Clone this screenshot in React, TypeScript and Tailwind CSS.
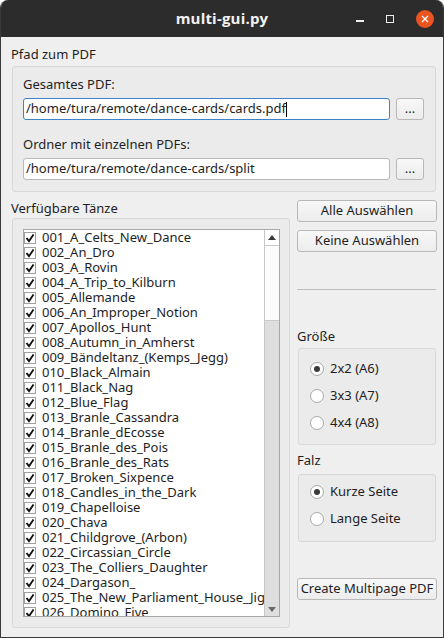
import React from 'react';

const dances = [
  '001_A_Celts_New_Dance',
  '002_An_Dro',
  '003_A_Rovin',
  '004_A_Trip_to_Kilburn',
  '005_Allemande',
  '006_An_Improper_Notion',
  '007_Apollos_Hunt',
  '008_Autumn_in_Amherst',
  '009_Bändeltanz_(Kemps_Jegg)',
  '010_Black_Almain',
  '011_Black_Nag',
  '012_Blue_Flag',
  '013_Branle_Cassandra',
  '014_Branle_dEcosse',
  '015_Branle_des_Pois',
  '016_Branle_des_Rats',
  '017_Broken_Sixpence',
  '018_Candles_in_the_Dark',
  '019_Chapelloise',
  '020_Chava',
  '021_Childgrove_(Arbon)',
  '022_Circassian_Circle',
  '023_The_Colliers_Daughter',
  '024_Dargason_',
  '025_The_New_Parliament_House_Jig',
  '026_Domino_Five',
];

function Button({ label, className = '' }: { label: string; className?: string }) {
  return (
    <button
      className={
        'flex items-center justify-center h-[22px] rounded-[3px] border border-[#b8b8b8] bg-gradient-to-b from-[#f8f8f8] to-[#ececec] text-[13px] text-[#1e1e1e] ' +
        className
      }
    >
      {label}
    </button>
  );
}

function Radio({ label, checked }: { label: string; checked?: boolean }) {
  return (
    <div className="flex items-center h-[27px]">
      <span className="flex items-center justify-center w-[14px] h-[14px] rounded-full border border-[#a8a8a8] bg-white">
        {checked && <span className="w-[6px] h-[6px] rounded-full bg-[#3a3a3a]" />}
      </span>
      <span className="ml-[6px] text-[13px] text-[#1e1e1e]">{label}</span>
    </div>
  );
}

function Check() {
  return (
    <span className="flex items-center justify-center w-[12px] h-[12px] border border-[#a0a0a0] bg-white">
      <svg width="10" height="10" viewBox="0 0 10 10">
        <path d="M1.5 5 L4 8.2 L8.5 1.5" fill="none" stroke="#111" strokeWidth="1.9" />
      </svg>
    </span>
  );
}

export default function App() {
  return (
    <div className="w-[444px] h-[638px] bg-white" style={{ fontFamily: '"Noto Sans", sans-serif' }}>
      <div className="w-full h-full flex flex-col bg-[#efefef] border-x border-b border-[#3a3a3a] rounded-t-[8px] overflow-hidden">
        {/* title bar */}
        <div className="relative h-[37px] shrink-0 bg-[#2c2c2c] flex items-center justify-center">
          <span className="text-[15px] font-bold text-[#f2f2f2] tracking-[0.2px]" style={{ fontFamily: '"Open Sans", sans-serif' }}>
            multi-gui.py
          </span>
          <div className="absolute right-[9px] top-0 h-full flex items-center gap-[22px]">
            <span className="w-[8px] h-[1.5px] bg-[#eee] mt-[5px]" />
            <span className="w-[8px] h-[8px] border border-[#eee]" />
            <span className="w-[18px] h-[18px] rounded-full bg-[#e95420] flex items-center justify-center">
              <svg width="8" height="8" viewBox="0 0 8 8">
                <path d="M1 1 L7 7 M7 1 L1 7" stroke="#fff" strokeWidth="1.4" />
              </svg>
            </span>
          </div>
        </div>

        <div className="flex-1 flex flex-col px-[10px] text-[13px] text-[#1e1e1e]">
          {/* path section */}
          <div className="h-[29px] flex items-center pt-[7px]">Pfad zum PDF</div>
          <div className="ml-[1px] w-[424px] h-[126px] rounded-[3px] border border-[#d8d8d8] bg-[#ebebeb] px-[10px] pt-[7px]">
            <div className="h-[22px] flex items-center">Gesamtes PDF:</div>
            <div className="flex gap-[6px] mt-[2px]">
              <div className="w-[367px] h-[22px] rounded-[3px] border border-[#3d83c9] bg-white flex items-center pl-[2px]">
                /home/tura/remote/dance-cards/cards.pdf<span className="w-px h-[15px] bg-black" />
              </div>
              <Button label="..." className="w-[28px]" />
            </div>
            <div className="h-[22px] flex items-center mt-[14px]">Ordner mit einzelnen PDFs:</div>
            <div className="flex gap-[6px] mt-[2px]">
              <div className="w-[367px] h-[22px] rounded-[3px] border border-[#b8b8b8] bg-white flex items-center pl-[2px]">
                /home/tura/remote/dance-cards/split
              </div>
              <Button label="..." className="w-[28px]" />
            </div>
          </div>

          {/* lower section */}
          <div className="flex mt-[8px] gap-[7px]">
            <div className="w-[279px] flex flex-col">
              <div className="h-[18px] flex items-center">Verfügbare Tänze</div>
              <div className="ml-[1px] w-[278px] h-[410px] rounded-[3px] border border-[#d8d8d8] bg-[#ebebeb] pl-[10px] pt-[10px]">
                <div className="w-[257px] h-[388px] border border-[#a8a8a8] bg-white flex overflow-hidden">
                  <div className="flex-1 overflow-hidden">
                    {dances.map((d) => (
                      <div key={d} className="h-[15px] flex items-center whitespace-nowrap">
                        <Check />
                        <span className="ml-[6px] leading-none">{d}</span>
                      </div>
                    ))}
                  </div>
                  <div className="w-[15px] border-l border-[#c8c8c8] flex flex-col bg-[#dedede]">
                    <div className="h-[15px] bg-white flex items-center justify-center">
                      <svg width="8" height="5" viewBox="0 0 8 5">
                        <path d="M0 5 L4 0 L8 5 Z" fill="#3a3a3a" />
                      </svg>
                    </div>
                    <div className="h-[76px] bg-[#fbfbfb] border-y border-[#c8c8c8]" />
                    <div className="flex-1" />
                    <div className="h-[13px] bg-[#dedede] flex items-center justify-center">
                      <svg width="8" height="5" viewBox="0 0 8 5">
                        <path d="M0 0 L4 5 L8 0 Z" fill="#6a6a6a" />
                      </svg>
                    </div>
                  </div>
                </div>
              </div>
            </div>

            <div className="w-[140px] flex flex-col">
              <Button label="Alle Auswählen" className="w-[140px]" />
              <Button label="Keine Auswählen" className="w-[140px] mt-[8px]" />
              <div className="mt-[37px] h-px bg-[#bdbdbd] w-[139px]" />
              <div className="mt-[38px] h-[18px] flex items-center">Größe</div>
              <div className="mt-[2px] ml-[1px] w-[138px] h-[97px] rounded-[3px] border border-[#d8d8d8] bg-[#ebebeb] pl-[11px] pt-[6px]">
                <Radio label="2x2 (A6)" checked />
                <Radio label="3x3 (A7)" />
                <Radio label="4x4 (A8)" />
              </div>
              <div className="mt-[7px] h-[18px] flex items-center">Falz</div>
              <div className="mt-[4px] ml-[1px] w-[138px] h-[68px] rounded-[3px] border border-[#d8d8d8] bg-[#ebebeb] pl-[11px] pt-[3px]">
                <Radio label="Kurze Seite" checked />
                <Radio label="Lange Seite" />
              </div>
              <Button label="Create Multipage PDF" className="w-[140px] mt-[36px]" />
            </div>
          </div>
        </div>
      </div>
    </div>
  );
}
